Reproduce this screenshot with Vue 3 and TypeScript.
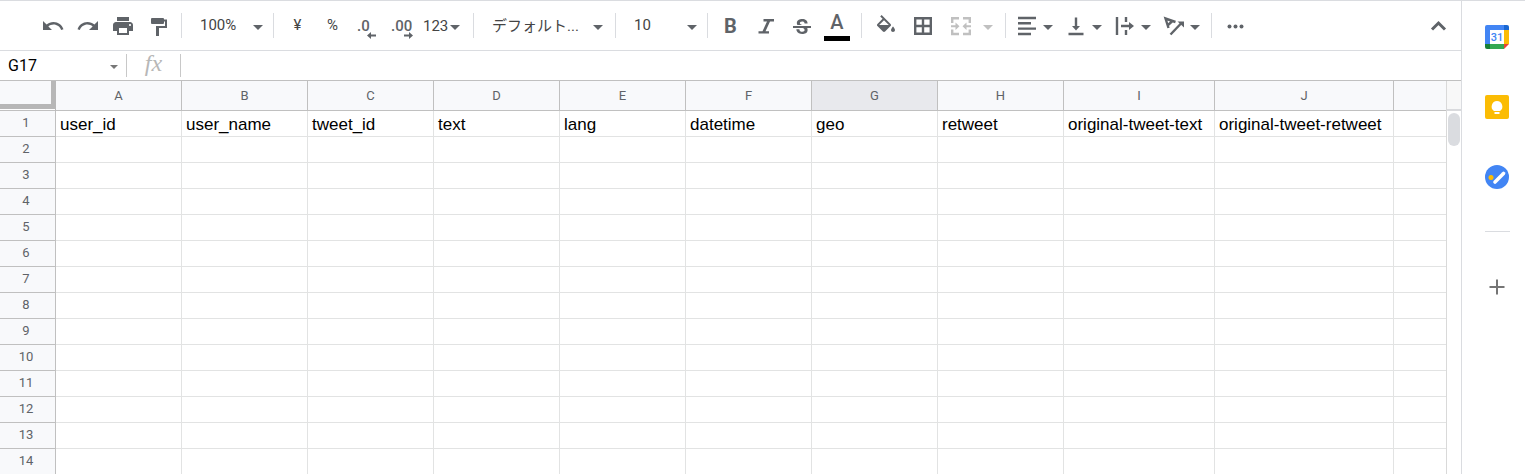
<script setup lang="ts">
import { ref } from 'vue'

interface Column {
  letter: string
  title: string
  size: 'regular' | 'wide' | 'widest' | 'rest'
}

const columns: Column[] = [
  { letter: 'A', title: 'user_id', size: 'regular' },
  { letter: 'B', title: 'user_name', size: 'regular' },
  { letter: 'C', title: 'tweet_id', size: 'regular' },
  { letter: 'D', title: 'text', size: 'regular' },
  { letter: 'E', title: 'lang', size: 'regular' },
  { letter: 'F', title: 'datetime', size: 'regular' },
  { letter: 'G', title: 'geo', size: 'regular' },
  { letter: 'H', title: 'retweet', size: 'regular' },
  { letter: 'I', title: 'original-tweet-text', size: 'wide' },
  { letter: 'J', title: 'original-tweet-retweet', size: 'widest' },
  { letter: '', title: '', size: 'rest' },
]
const rows = Array.from({ length: 14 }, (_, i) => i + 1)
const activeColumn = 'G'
const cellName = ref('G17')
const formula = ref('')
</script>

<template>
  <div class="app">
    <main class="sheet">
      <div class="toolbar" role="toolbar">
        <button class="tool" aria-label="元に戻す">
          <svg viewBox="0 0 24 24"><path d="M12.5 8c-2.65 0-5.05.99-6.9 2.6L2 7v9h9l-3.62-3.62c1.39-1.16 3.16-1.88 5.12-1.88 3.54 0 6.55 2.31 7.6 5.5l2.37-.78C21.08 11.03 17.15 8 12.5 8z" /></svg>
        </button>
        <button class="tool" aria-label="やり直し">
          <svg viewBox="0 0 24 24"><path d="M18.4 10.6C16.55 8.99 14.15 8 11.5 8c-4.65 0-8.58 3.03-9.96 7.22L3.9 16c1.05-3.19 4.05-5.5 7.6-5.5 1.95 0 3.73.72 5.12 1.88L13 16h9V7l-3.6 3.6z" /></svg>
        </button>
        <button class="tool" aria-label="印刷">
          <svg viewBox="0 0 24 24"><path d="M19 8H5c-1.66 0-3 1.34-3 3v6h4v4h12v-4h4v-6c0-1.66-1.34-3-3-3zm-3 11H8v-5h8v5zm3-7c-.55 0-1-.45-1-1s.45-1 1-1 1 .45 1 1-.45 1-1 1zm-1-9H6v4h12V3z" /></svg>
        </button>
        <button class="tool" aria-label="書式を貼り付け">
          <svg viewBox="0 0 24 24"><path d="M6 4h11q1 0 1 1v.5h3V14h-8v8h-3V12h9V7.500h-1V9q0 1-1 1H6q-1 0-1-1V5q0-1 1-1z" /></svg>
        </button>
        <span class="sep"></span>
        <label class="pick zoom">
          <select aria-label="ズーム"><option>100%</option></select>
          <svg class="arrow" viewBox="0 0 10 5"><path d="M0 0h10L5 5z" /></svg>
        </label>
        <span class="sep"></span>
        <button class="tool symbol">¥</button>
        <button class="tool symbol">%</button>
        <button class="tool" aria-label="小数点以下の桁数を減らす">
          <svg viewBox="0 0 24 24"><text x="1" y="17">.0</text><path d="M11 21.500l4-3.500v2.500h5v2h-5V25z" /></svg>
        </button>
        <button class="tool" aria-label="小数点以下の桁数を増やす">
          <svg viewBox="0 0 24 24"><text x="0" y="17">.00</text><path d="M22 21.500L18 18v2.500h-5v2h5V25z" /></svg>
        </button>
        <button class="formats">123<svg class="arrow" viewBox="0 0 10 5"><path d="M0 0h10L5 5z" /></svg></button>
        <span class="sep"></span>
        <label class="pick font">
          <select aria-label="フォント"><option>デフォルト...</option></select>
          <svg class="arrow" viewBox="0 0 10 5"><path d="M0 0h10L5 5z" /></svg>
        </label>
        <span class="sep"></span>
        <label class="pick points">
          <select aria-label="フォントサイズ"><option>10</option></select>
          <svg class="arrow" viewBox="0 0 10 5"><path d="M0 0h10L5 5z" /></svg>
        </label>
        <span class="sep"></span>
        <button class="tool bold" aria-label="太字">B</button>
        <button class="tool" aria-label="斜体">
          <svg viewBox="0 0 24 24"><path d="M8.500 5H19v2.400h-4l-4.500 9.800H14v2.400H3.500v-2.400h4L12 7.400H8.500z" /></svg>
        </button>
        <button class="tool" aria-label="取り消し線">
          <svg viewBox="0 -2 24 24"><path d="M6.85 7.08C6.85 4.37 9.45 3 12.24 3c1.64 0 3 .49 3.9 1.28.77.65 1.46 1.73 1.46 3.24h-3.01c0-.31-.05-.59-.15-.85-.29-.86-1.2-1.28-2.25-1.28-1.86 0-2.34 1.02-2.34 1.7 0 .48.25.88.74 1.21.38.25.77.48 1.41.7H7.39c-.21-.34-.54-.89-.54-1.92zM21 12v-2H3v2h9.62c1.15.45 1.96.75 1.96 1.97 0 1-.81 1.67-2.28 1.67-1.54 0-2.93-.54-2.93-2.51H6.4c0 .55.08 1.13.24 1.58.81 2.29 3.29 3.3 5.67 3.3 2.27 0 5.3-.89 5.3-4.05 0-.3-.01-1.16-.48-1.94H21V12z" /></svg>
        </button>
        <button class="tool color" aria-label="テキストの色"><span>A</span><i class="swatch"></i></button>
        <span class="sep"></span>
        <button class="tool fill" aria-label="塗りつぶしの色">
          <svg viewBox="0 -1 24 24"><path d="M16.56 8.94L7.62 0 6.21 1.41l2.38 2.38-5.15 5.15c-.59.59-.59 1.54 0 2.12l5.5 5.5c.29.29.68.44 1.06.44s.77-.15 1.06-.44l5.5-5.5c.59-.58.59-1.53 0-2.12zM5.21 10L10 5.21 14.79 10H5.21zM19 11.5s-2 2.17-2 3.5c0 1.1.9 2 2 2s2-.9 2-2c0-1.33-2-3.5-2-3.500z" /></svg>
        </button>
        <button class="tool borders" aria-label="枠線">
          <svg viewBox="0 0 24 24"><path class="line thick" d="M4.200 4.200h15.600v15.600H4.200zM12 4v16M4 12h16" /></svg>
        </button>
        <button class="split merge" disabled aria-label="セルを結合">
          <svg viewBox="0 0 24 24"><path class="line thick" d="M3.200 9V4.200H10M14 4.200h6.800V9M3.200 15.500v4.500H10M14 20h6.800v-4.500" /><path d="M2 11.200h4.500V8.500l4 3.700-4 3.700v-2.700H2zM22 11.200h-4.500V8.500l-4 3.700 4 3.700v-2.700H22z" /></svg>
          <svg class="arrow" viewBox="0 0 10 5"><path d="M0 0h10L5 5z" /></svg>
        </button>
        <span class="sep"></span>
        <div class="group">
          <button class="split" aria-label="水平方向の配置">
            <svg viewBox="0 0 24 24"><path class="line thick" d="M3 4h18M3 9.300h13M3 14.600h18M3 20h13" /></svg>
            <svg class="arrow" viewBox="0 0 10 5"><path d="M0 0h10L5 5z" /></svg>
          </button>
          <button class="split" aria-label="垂直方向の配置">
            <svg viewBox="0 0 24 24"><path class="line thick" d="M4.500 20h15M12 3.500v9" /><path d="M8 12h8l-4 4.500z" /></svg>
            <svg class="arrow" viewBox="0 0 10 5"><path d="M0 0h10L5 5z" /></svg>
          </button>
          <button class="split" aria-label="テキストを折り返す">
            <svg viewBox="0 0 24 24"><path class="line thick" d="M4 3v18M13 3v5M13 16v5M8 12h9" /><path d="M16 8l5 4-5 4z" /></svg>
            <svg class="arrow" viewBox="0 0 10 5"><path d="M0 0h10L5 5z" /></svg>
          </button>
          <button class="split" aria-label="テキストの回転">
            <svg viewBox="0 0 24 24"><path class="line thick" d="M6.500 14L3.500 4.500l10 3.500M5.500 11.500l5.500-5" /><path class="line thick" d="M8.500 20.500L19 9.500" /><path d="M15.500 7.500H22v6z" /></svg>
            <svg class="arrow" viewBox="0 0 10 5"><path d="M0 0h10L5 5z" /></svg>
          </button>
        </div>
        <span class="sep"></span>
        <button class="tool" aria-label="もっと見る">
          <svg viewBox="0 0 24 24"><circle cx="5.500" cy="12.500" r="2" /><circle cx="11.500" cy="12.500" r="2" /><circle cx="17.500" cy="12.500" r="2" /></svg>
        </button>
        <button class="tool collapse" aria-label="メニューを非表示">
          <svg viewBox="0 0 24 24"><path class="line bolder" d="M5 15.500L11.500 9l6.500 6.500" /></svg>
        </button>
      </div>

      <div class="formula-bar">
        <input v-model="cellName" class="name" aria-label="名前ボックス" />
        <button class="name-menu" aria-label="名前付き範囲"><svg viewBox="0 0 8 4"><path d="M0 0h8L4 4z" /></svg></button>
        <span class="bar-sep"></span>
        <label class="fx" for="formula">fx</label>
        <span class="bar-sep"></span>
        <input id="formula" v-model="formula" class="formula" />
      </div>

      <div class="grid">
        <table>
          <colgroup>
            <col class="numbers" />
            <col v-for="(c, i) in columns" :key="i" :class="c.size" />
          </colgroup>
          <thead>
            <tr>
              <td class="corner"><div></div></td>
              <th v-for="(c, i) in columns" :key="i" scope="col" :class="{ active: c.letter === activeColumn }">{{ c.letter }}</th>
            </tr>
          </thead>
          <tbody>
            <tr v-for="r in rows" :key="r">
              <th scope="row">{{ r }}</th>
              <td v-for="(c, i) in columns" :key="i">{{ r === 1 ? c.title : '' }}</td>
            </tr>
          </tbody>
        </table>
        <div class="scroll">
          <div class="scroll-head"></div>
          <div class="thumb"></div>
        </div>
      </div>
    </main>

    <aside class="side">
      <button aria-label="カレンダー">
        <svg viewBox="0 0 24 24">
          <path fill="#4285f4" d="M2 0h17v5H5v14H0V2q0-2 2-2z" />
          <path fill="#1967d2" d="M19 0h3q2 0 2 2v3h-5z" />
          <path fill="#fbbc04" d="M19 5h5v14h-5z" />
          <path fill="#34a853" d="M5 19h14v5H5z" />
          <path fill="#188038" d="M0 19h5v5H2q-2 0-2-2z" />
          <path fill="#ea4335" d="M19 19h5l-5 5z" />
          <path fill="#fff" d="M5 5h14v14H5z" />
          <text x="12" y="16" text-anchor="middle">31</text>
        </svg>
      </button>
      <button aria-label="Keep">
        <svg viewBox="0 0 24 24">
          <rect width="24" height="24" rx="2" fill="#fbbc04" />
          <path fill="#fff" d="M12 6a5.500 5.500 0 0 0-3 10h6a5.500 5.500 0 0 0-3-10zM9.500 17h5v2h-5z" />
        </svg>
      </button>
      <button aria-label="ToDo リスト">
        <svg viewBox="0 0 24 24">
          <circle cx="12" cy="12" r="12" fill="#4285f4" />
          <circle cx="6" cy="12.500" r="2.500" fill="#fbbc04" />
          <path d="M10 17l8.500-8.500" fill="none" stroke="#fff" stroke-width="3.600" stroke-linecap="round" />
        </svg>
      </button>
      <hr />
      <button aria-label="アドオンを取得">
        <svg viewBox="0 0 24 24"><path d="M4.500 12h15M12 4.500v15" fill="none" stroke="#757575" stroke-width="2" /></svg>
      </button>
    </aside>
  </div>
</template>

<style>
body {
  overflow: hidden;
}
</style>

<style scoped>
.app {
  display: grid;
  grid-template-columns: minmax(0, 1fr) 64px;
  box-sizing: border-box;
  height: 100vh;
  border-top: 1px solid #dadce0;
  background: #fff;
  font-family: Roboto, "Noto Sans CJK JP", sans-serif;
}
.sheet {
  display: flex;
  flex-direction: column;
  min-width: 0;
  overflow: hidden;
}
button,
input,
select {
  margin: 0;
  padding: 0;
  border: 0;
  background: none;
  outline: none;
  font-family: inherit;
  color: inherit;
}
svg {
  flex: none;
  overflow: visible;
}

.toolbar {
  display: flex;
  flex: none;
  align-items: center;
  height: 49px;
  padding-left: 35px;
  border-bottom: 1px solid #dadce0;
  color: #444;
}
.toolbar svg {
  width: 24px;
  height: 24px;
  fill: #5f6368;
}
.toolbar svg.arrow {
  width: 10px;
  height: 5px;
  margin-top: 3px;
}
.toolbar text {
  font-size: 15px;
  font-weight: 500;
}
.toolbar .line {
  fill: none;
  stroke: #5f6368;
  stroke-width: 2;
}
.toolbar .thick {
  stroke-width: 2.400;
}
.toolbar .bolder {
  stroke-width: 3;
}
.tool,
.formats,
.split {
  display: flex;
  flex: none;
  align-items: center;
  height: 32px;
  font-size: 15px;
}
.tool {
  justify-content: center;
  width: 35px;
}
.symbol {
  padding-bottom: 2px;
}
.sep {
  flex: none;
  width: 1px;
  height: 25px;
  margin: 0 6px;
  background: #dadce0;
}
.pick {
  display: flex;
  flex: none;
  align-items: center;
  box-sizing: border-box;
  padding: 0 4px 0 12px;
}
.pick select {
  flex: 1;
  min-width: 0;
  height: 24px;
  appearance: none;
  font-size: 15px;
}
.zoom,
.points {
  width: 79px;
}
.zoom select,
.points select {
  padding-bottom: 2px;
}
.font {
  width: 129px;
  padding-right: 6px;
}
.formats {
  gap: 2px;
  width: 47px;
  padding-left: 3px;
}
.bold {
  padding-right: 2px;
  color: #5f6368;
  font-size: 20px;
  font-weight: 700;
}
.color {
  flex-direction: column;
  gap: 2px;
  width: 36px;
  color: #5f6368;
  font-size: 20px;
  font-weight: 500;
  line-height: 24px;
}
.swatch {
  flex: none;
  width: 26px;
  height: 5px;
  background: #000;
}
.fill {
  width: 36px;
}
.borders {
  width: 38px;
}
.group {
  display: flex;
  flex: none;
  gap: 3px;
}
.split {
  gap: 4px;
  width: 46px;
  padding-left: 3px;
}
.merge {
  gap: 10px;
  width: 57px;
  padding-left: 7px;
}
.toolbar .merge svg {
  fill: #c0c0c0;
}
.toolbar .merge .line {
  stroke: #c0c0c0;
}
.collapse {
  margin-right: 5px;
  margin-left: auto;
}

.formula-bar {
  display: flex;
  flex: none;
  align-items: center;
  height: 29px;
  border-bottom: 1px solid #c0c0c0;
  color: #000;
}
.name {
  width: 96px;
  padding-left: 8px;
  font-size: 16px;
}
.name-menu {
  display: flex;
  justify-content: center;
  width: 20px;
  margin-right: 2px;
}
.name-menu svg {
  width: 8px;
  height: 4px;
  margin-top: 2px;
  fill: #777;
}
.bar-sep {
  flex: none;
  width: 1px;
  height: 23px;
  background: #c8c8c8;
}
.fx {
  width: 53px;
  padding-bottom: 5px;
  color: #b7b7b7;
  font: italic 24px/24px "Liberation Serif", serif;
  text-align: center;
}
.formula {
  flex: 1;
  min-width: 0;
  padding-left: 6px;
  font-size: 16px;
}

.grid {
  display: flex;
  flex: 1;
  min-height: 0;
  overflow: hidden;
}
table {
  flex: 1;
  align-self: flex-start;
  width: 100%;
  min-width: 0;
  table-layout: fixed;
  border-collapse: separate;
  border-spacing: 0;
}
.numbers {
  width: 56px;
}
.regular {
  width: 126px;
}
.wide {
  width: 151px;
}
.widest {
  width: 179px;
}
th,
td {
  box-sizing: border-box;
  height: 26px;
  padding: 0;
  border-right: 1px solid #e2e3e3;
  border-bottom: 1px solid #e2e3e3;
  white-space: nowrap;
}
th {
  border-color: #c0c0c0;
  background: #f8f9fb;
  color: #5f6368;
  font-size: 13px;
  font-weight: 400;
  line-height: 20px;
}
thead th,
.corner {
  height: 30px;
}
tbody th {
  padding: 0 3px 1px 0;
}
tbody td {
  padding: 2px 0 0 4px;
  color: #000;
  font: 17px/22px "Liberation Sans", Arial, sans-serif;
}
tr > :last-child {
  border-right: 0;
}
th.active {
  background: #e8e9ed;
}
.corner {
  border-right-color: #b7b7b7;
  border-bottom-color: #c0c0c0;
  vertical-align: top;
}
.corner div {
  box-sizing: border-box;
  height: 28px;
  border-right: 4px solid #b7b7b7;
  border-bottom: 5px solid #b7b7b7;
  background: #f8f9fb;
}
.scroll {
  flex: none;
  box-sizing: border-box;
  width: 15px;
  border-left: 1px solid #d9d9d9;
}
.scroll-head {
  height: 28px;
  border-bottom: 2px solid #d9dadd;
  background: #f8f8f8;
}
.thumb {
  height: 33px;
  margin: 2px 1px 0;
  border-radius: 6px;
  background: #dadce0;
}

.side {
  display: flex;
  flex-direction: column;
  align-items: center;
  gap: 46px;
  padding: 24px 0 0 7px;
  border-left: 1px solid #dadce0;
}
.side button,
.side svg {
  display: block;
  width: 24px;
  height: 24px;
}
.side text {
  fill: #4285f4;
  font-size: 11px;
  font-weight: 500;
}
.side hr {
  width: 25px;
  height: 1px;
  margin: -4px 0 -3px;
  border: 0;
  background: #dadce0;
}
</style>
